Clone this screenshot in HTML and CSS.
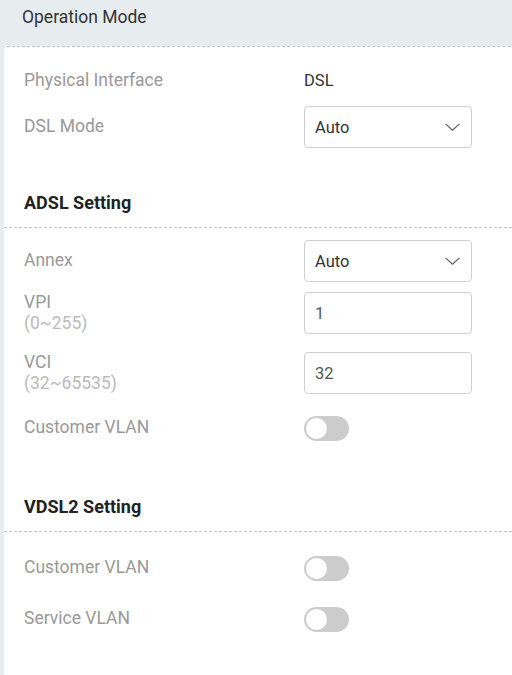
FILE: index.html
```html
<!DOCTYPE html>
<html>
<head>
<meta charset="utf-8">
<link rel="stylesheet" href="styles.css">
</head>
<body>
<div class="header">Operation Mode</div>
<div class="panel">
  <div class="body first">
    <div class="row row-text">
      <div class="label">Physical Interface</div>
      <div class="value">DSL</div>
    </div>
    <div class="row">
      <div class="label">DSL Mode</div>
      <div class="select"><span>Auto</span><svg class="chev" width="15" height="8" viewBox="0 0 15 8"><path d="M0.5 0.8 L7.5 7.2 L14.5 0.8" fill="none" stroke="#555" stroke-width="1.1"/></svg></div>
    </div>
  </div>

  <div class="section-title adsl">ADSL Setting</div>
  <div class="body">
    <div class="row">
      <div class="label">Annex</div>
      <div class="select"><span>Auto</span><svg class="chev" width="15" height="8" viewBox="0 0 15 8"><path d="M0.5 0.8 L7.5 7.2 L14.5 0.8" fill="none" stroke="#555" stroke-width="1.1"/></svg></div>
    </div>
    <div class="row row-two">
      <div class="label">VPI<br><span class="hint">(0~255)</span></div>
      <div class="input">1</div>
    </div>
    <div class="row row-two">
      <div class="label">VCI<br><span class="hint">(32~65535)</span></div>
      <div class="input">32</div>
    </div>
    <div class="row row-toggle">
      <div class="label">Customer VLAN</div>
      <div class="toggle"><span class="knob"></span></div>
    </div>
  </div>

  <div class="section-title vdsl">VDSL2 Setting</div>
  <div class="body vdsl-body">
    <div class="row row-toggle">
      <div class="label">Customer VLAN</div>
      <div class="toggle"><span class="knob"></span></div>
    </div>
    <div class="row row-toggle">
      <div class="label">Service VLAN</div>
      <div class="toggle"><span class="knob"></span></div>
    </div>
  </div>
</div>
</body>
</html>
```

FILE: styles.css
```css
html, body {
  margin: 0;
  padding: 0;
}
body {
  background: #e7ecef;
  font-family: Roboto, "Liberation Sans", sans-serif;
  font-size: 17.5px;
  color: #333;
  width: 512px;
  height: 675px;
  overflow: hidden;
}
.header {
  height: 46px;
  box-sizing: border-box;
  padding: 7px 0 0 22px;
  line-height: 20px;
  color: #333;
}
.panel {
  margin-left: 4px;
  background: #fff;
  border-top: 1px dashed #c4c4c4;
  border-top-left-radius: 3px;
  min-height: 640px;
  padding-top: 13px;
}
.body {
  display: flex;
  flex-direction: column;
  gap: 10px;
  padding-top: 12px;
}
.body.first {
  padding-top: 0;
  gap: 6px;
}
.row {
  display: flex;
  align-items: center;
  padding-left: 20px;
  height: 42px;
}
.row-text {
  height: 40px;
}
.label {
  width: 280px;
  color: #999;
  line-height: 20px;
  margin-top: -2px;
}
.row-text .label {
  margin-top: 0;
}
.row-two .label {
  line-height: 21px;
  margin-top: 0;
}
.row-two + .row-two {
  margin-top: 8px;
}
.row-two + .row-toggle {
  margin-top: 3px;
}
.hint {
  color: #bbb;
}
.value {
  color: #333;
  font-size: 16.5px;
}
.select, .input {
  width: 168px;
  height: 42px;
  box-sizing: border-box;
  border: 1px solid #cfcfcf;
  border-radius: 4px;
  padding: 0 11px 0 10px;
  display: flex;
  align-items: center;
  justify-content: space-between;
  color: #333;
  font-size: 16.5px;
}
.input {
  color: #555;
}
.chev {
  display: block;
}
.toggle {
  width: 45px;
  height: 25px;
  border-radius: 13px;
  background: #cccccc;
  box-sizing: border-box;
  padding: 2px;
  display: flex;
}
.knob {
  width: 21px;
  height: 21px;
  border-radius: 50%;
  background: #fff;
}
.section-title {
  padding-left: 20px;
  line-height: 24px;
  padding-bottom: 12px;
  border-bottom: 1px dashed #c4c4c4;
  font-weight: 700;
  font-size: 18px;
  color: #222;
}
.section-title.adsl {
  margin-top: 43px;
}
.section-title.vdsl {
  margin-top: 46px;
}
.vdsl-body {
  padding-top: 15px;
  gap: 9px;
}
.vdsl-body .label {
  margin-top: -3px;
}
```
